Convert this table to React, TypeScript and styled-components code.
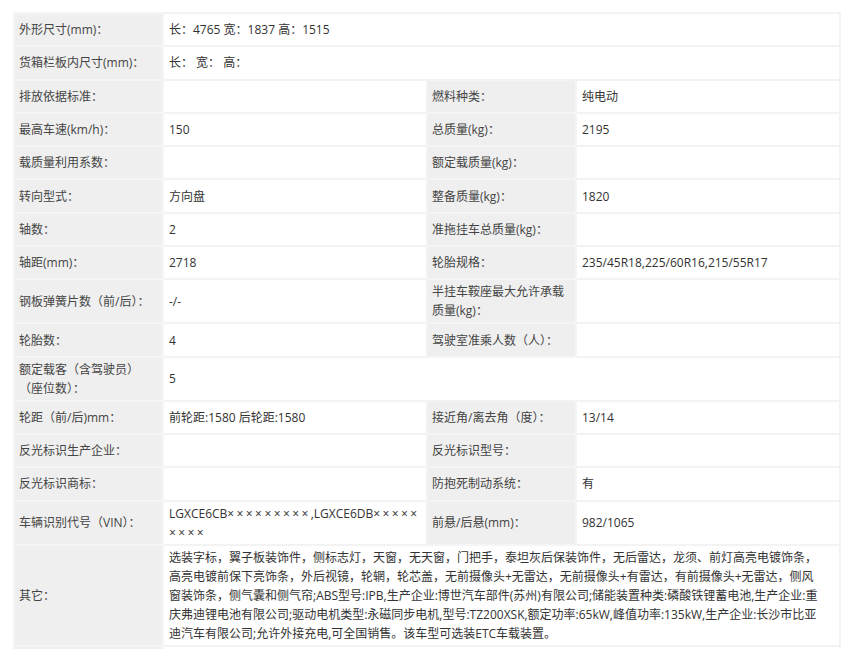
import React from "react";
import styled, { createGlobalStyle } from "styled-components";

const Global = createGlobalStyle`
  html, body { margin: 0; padding: 0; background: #ffffff; }
  body { font-family: "Open Sans", "Noto Sans CJK SC", sans-serif; }
`;

const Page = styled.div`
  padding: 12px 0 0 13px;
`;

const Table = styled.table`
  width: 826px;
  border-collapse: collapse;
  table-layout: fixed;
  font-size: 12px;
  line-height: 19px;
  color: #333333;
`;

const Row = styled.tr``;

const Label = styled.td`
  background: #efefef;
  border: 2px solid #f5f5f5;
  padding: 2px 4px;
  height: 27.3px;
  vertical-align: middle;
  color: #444444;
`;

const Value = styled.td`
  background: #ffffff;
  border: 2px solid #f3f3f3;
  padding: 2px 5px;
  height: 27.3px;
  vertical-align: middle;
  color: #333333;
`;

const Line = styled.span`
  display: block;
  white-space: nowrap;
`;

const Mask = styled.span`
  font-family: "Noto Sans", sans-serif;
  letter-spacing: 2.4px;
  color: #444444;
`;

const Col = styled.col<{ $w: number }>`
  width: ${(p) => p.$w}px;
`;

type Pair = [React.ReactNode, React.ReactNode];

const rows: { left: Pair; right?: Pair }[] = [
  { left: ["外形尺寸(mm)：", "长：4765 宽：1837 高：1515"] },
  { left: ["货箱栏板内尺寸(mm)：", "长： 宽： 高："] },
  { left: ["排放依据标准：", ""], right: ["燃料种类：", "纯电动"] },
  { left: ["最高车速(km/h)：", "150"], right: ["总质量(kg)：", "2195"] },
  { left: ["载质量利用系数：", ""], right: ["额定载质量(kg)：", ""] },
  { left: ["转向型式：", "方向盘"], right: ["整备质量(kg)：", "1820"] },
  { left: ["轴数：", "2"], right: ["准拖挂车总质量(kg)：", ""] },
  { left: ["轴距(mm)：", "2718"], right: ["轮胎规格：", "235/45R18,225/60R16,215/55R17"] },
  { left: ["钢板弹簧片数（前/后）：", "-/-"], right: ["半挂车鞍座最大允许承载质量(kg)：", ""] },
  { left: ["轮胎数：", "4"], right: ["驾驶室准乘人数（人）：", ""] },
  {
    left: [
      <>
        <Line>额定载客（含驾驶员）</Line>
        <Line>（座位数）：</Line>
      </>,
      "5",
    ],
  },
  { left: ["轮距（前/后)mm：", "前轮距:1580 后轮距:1580"], right: ["接近角/离去角（度）：", "13/14"] },
  { left: ["反光标识生产企业：", ""], right: ["反光标识型号：", ""] },
  { left: ["反光标识商标：", ""], right: ["防抱死制动系统：", "有"] },
  {
    left: [
      "车辆识别代号（VIN）：",
      <>
        <Line>
          LGXCE6CB<Mask>×××××××××</Mask>,LGXCE6DB<Mask>×××××</Mask>
        </Line>
        <Line>
          <Mask>××××</Mask>
        </Line>
      </>,
    ],
    right: ["前悬/后悬(mm)：", "982/1065"],
  },
  {
    left: [
      "其它：",
      <>
        <Line>选装字标，翼子板装饰件，侧标志灯，天窗，无天窗，门把手，泰坦灰后保装饰件，无后雷达，龙须、前灯高亮电镀饰条，</Line>
        <Line>高亮电镀前保下亮饰条，外后视镜，轮辋，轮芯盖，无前摄像头+无雷达，无前摄像头+有雷达，有前摄像头+无雷达，侧风</Line>
        <Line>窗装饰条，侧气囊和侧气帘;ABS型号:IPB,生产企业:博世汽车部件(苏州)有限公司;储能装置种类:磷酸铁锂蓄电池,生产企业:重</Line>
        <Line>庆弗迪锂电池有限公司;驱动电机类型:永磁同步电机,型号:TZ200XSK,额定功率:65kW,峰值功率:135kW,生产企业:长沙市比亚</Line>
        <Line>迪汽车有限公司;允许外接充电,可全国销售。该车型可选装ETC车载装置。</Line>
      </>,
    ],
  },
  { left: ["", ""] },
];

export default function App() {
  return (
    <Page>
      <Global />
      <Table>
        <colgroup>
          <Col $w={149} />
          <Col $w={264} />
          <Col $w={149} />
          <Col $w={264} />
        </colgroup>
        <tbody>
          {rows.map((r, i) => (
            <Row key={i}>
              <Label>{r.left[0]}</Label>
              {r.right ? (
                <>
                  <Value>{r.left[1]}</Value>
                  <Label>{r.right[0]}</Label>
                  <Value>{r.right[1]}</Value>
                </>
              ) : (
                <Value colSpan={3}>{r.left[1]}</Value>
              )}
            </Row>
          ))}
        </tbody>
      </Table>
    </Page>
  );
}
